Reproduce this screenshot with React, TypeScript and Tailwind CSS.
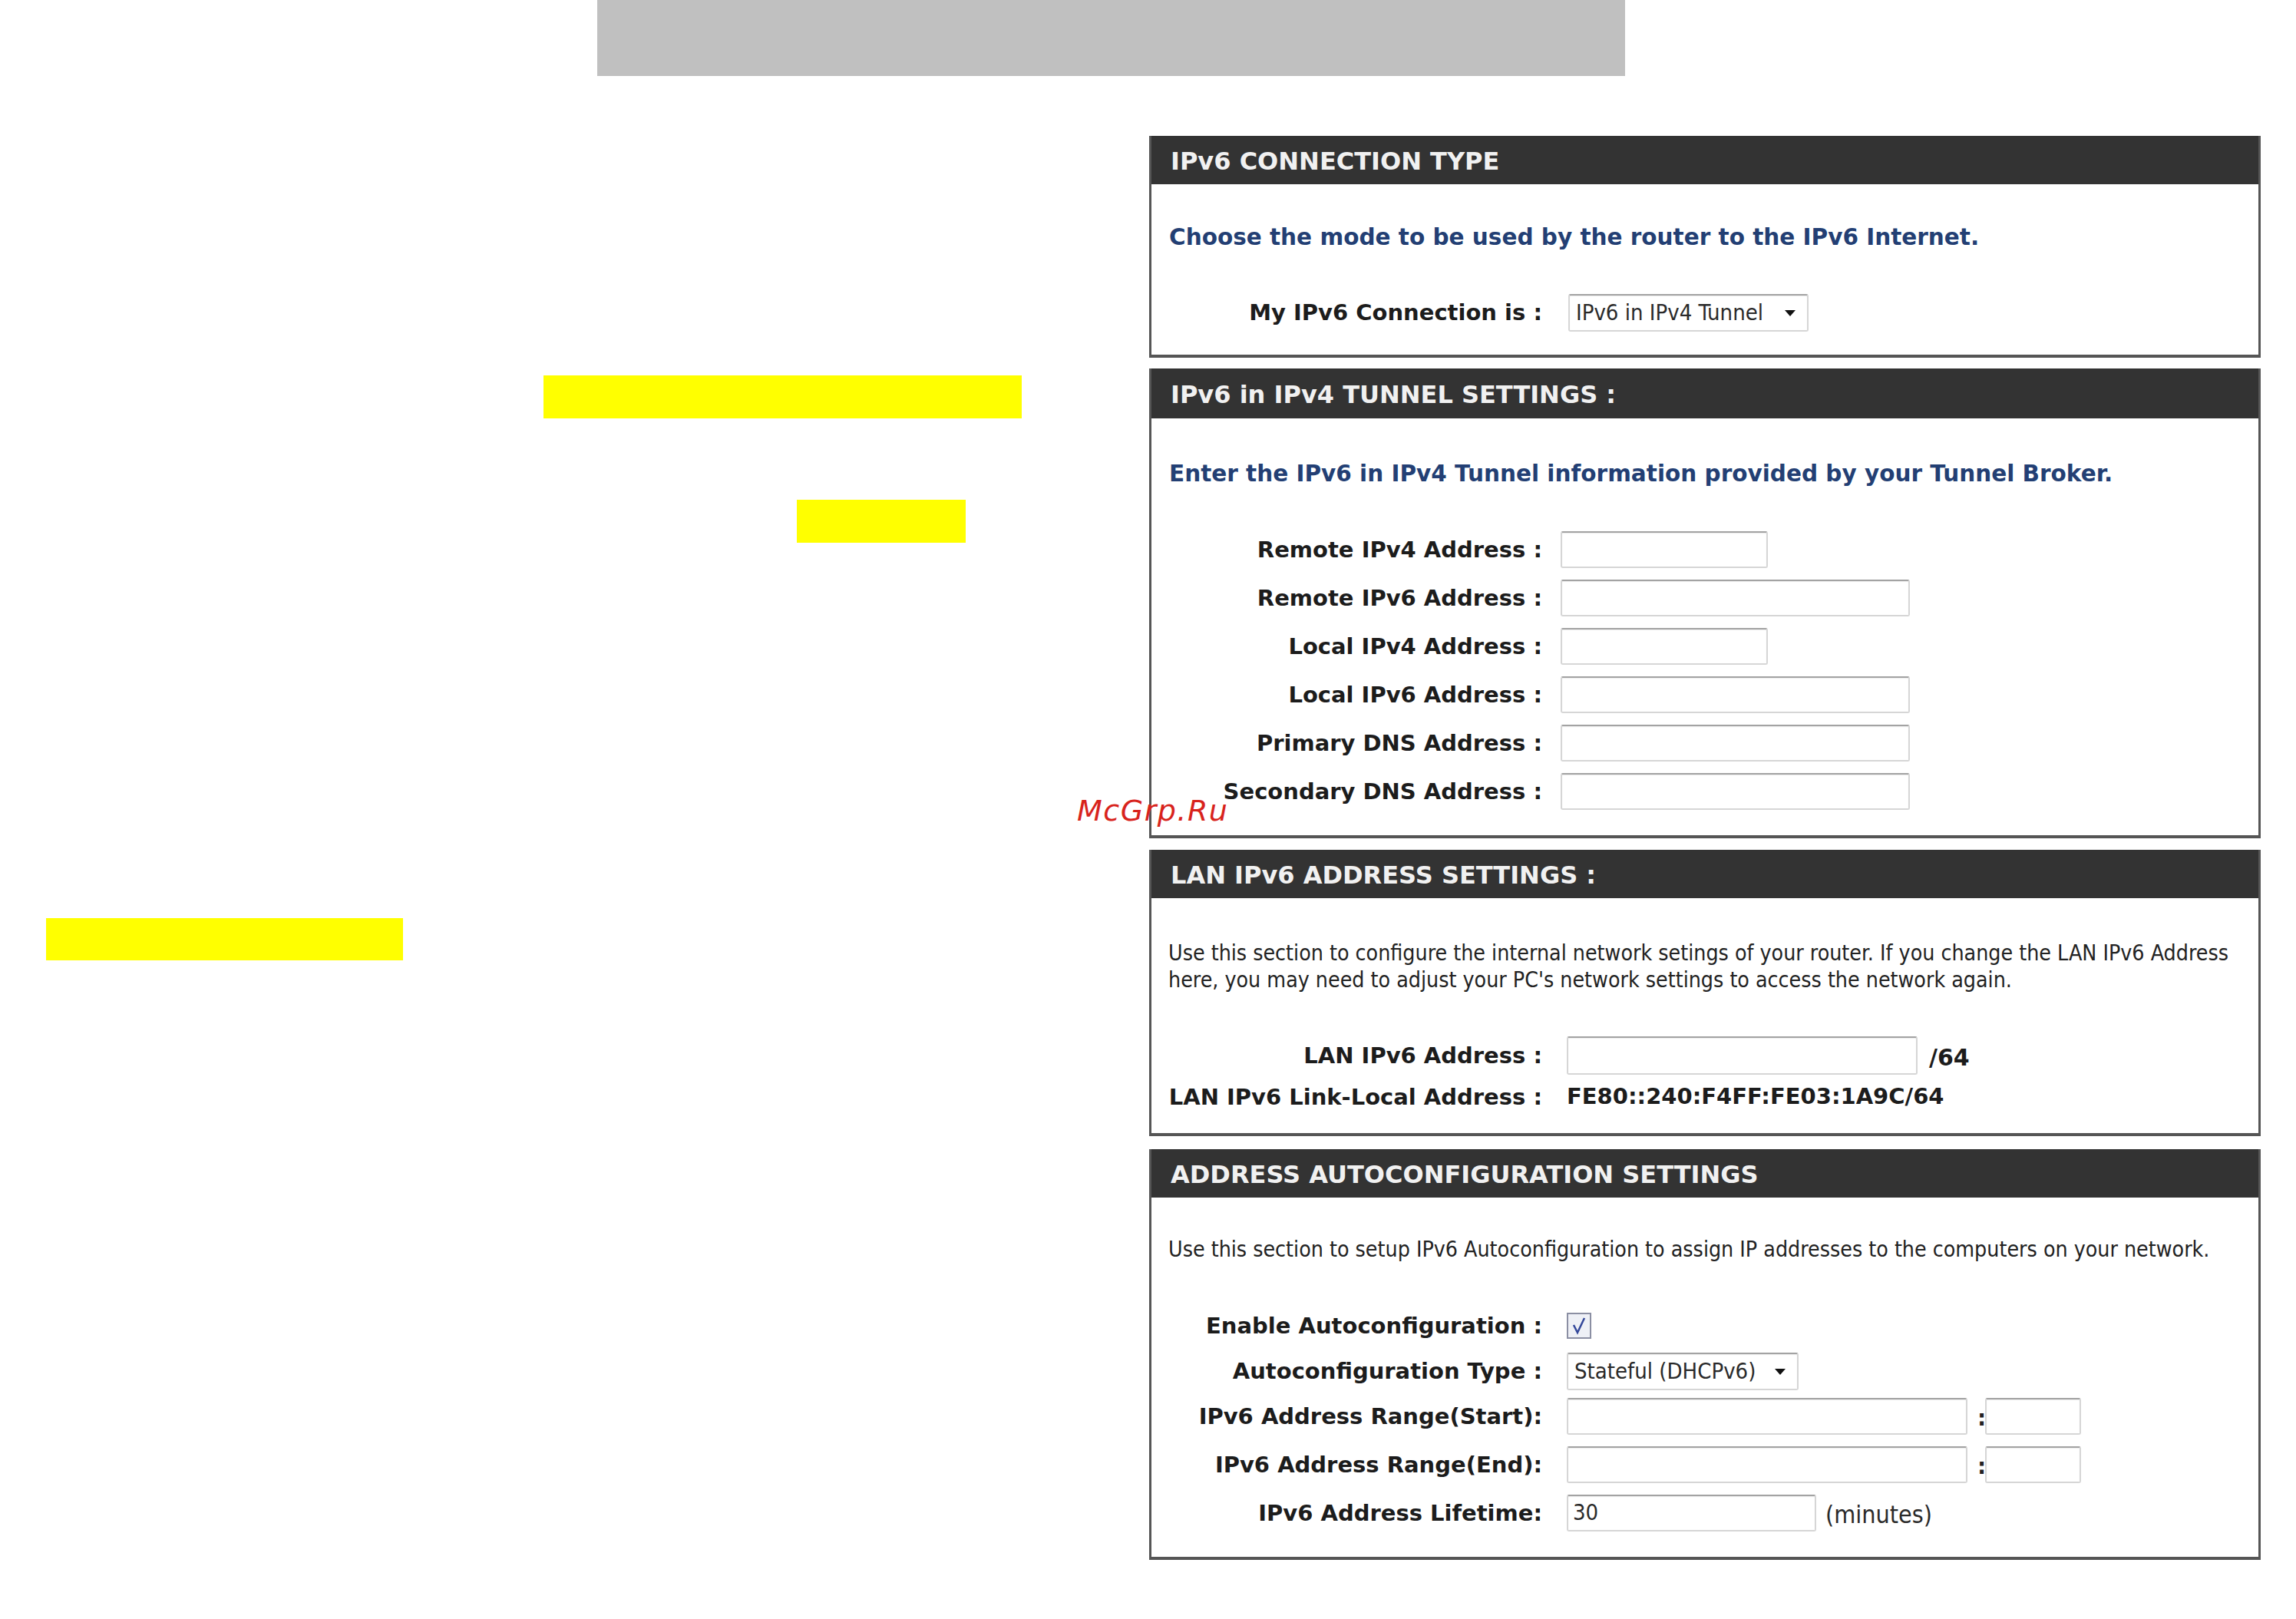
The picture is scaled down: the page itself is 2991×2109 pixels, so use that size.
import React from "react";

const LBL =
  "w-[509px] shrink-0 text-right whitespace-nowrap font-bold text-[29px] leading-none text-[#1c1c1c] font-['DejaVu_Sans',sans-serif]";
const INPUT =
  "bg-white border-2 border-[#d6d6d6] border-t-[#a3a3a3] rounded-[3px] shadow-[inset_0_1px_1px_rgba(0,0,0,0.08)]";
const BLUE =
  "font-bold text-[29.5px] leading-[40px] text-[#233f74] whitespace-nowrap font-['DejaVu_Sans',sans-serif]";
const PARA =
  "text-[28.3px] leading-[35px] text-[#222] whitespace-nowrap font-['DejaVu_Sans_Condensed','DejaVu_Sans',sans-serif]";
const SEL_TXT =
  "text-[29px] text-[#2a2a2a] whitespace-nowrap font-['DejaVu_Sans_Condensed','DejaVu_Sans',sans-serif]";

function Header({ children, h }: { children: React.ReactNode; h: string }) {
  return (
    <div
      className={`${h} bg-[#333333] flex items-center pl-[25px] pt-[3px] text-[#f1f1f1] font-bold text-[32px] tracking-[0px] whitespace-nowrap font-['DejaVu_Sans',sans-serif]`}
    >
      {children}
    </div>
  );
}

function Arrow() {
  return (
    <svg width="16" height="10" viewBox="0 0 16 10" className="shrink-0">
      <path d="M1 1 L15 1 L8 9 Z" fill="#111" />
    </svg>
  );
}

export default function App() {
  return (
    <div className="relative w-[2991px] h-[2109px] bg-white overflow-hidden">
      {/* gray band */}
      <div className="ml-[778px] w-[1339px] h-[99px] bg-[#c0c0c0]" />

      <div className="flex mt-[78px]">
        {/* left document column with highlights */}
        <div className="w-[1497px] shrink-0 flex flex-col">
          <div className="mt-[312px] ml-[708px] w-[623px] h-[56px] bg-[#ffff00]" />
          <div className="mt-[106px] ml-[1038px] w-[220px] h-[56px] bg-[#ffff00]" />
          <div className="mt-[489px] ml-[60px] w-[465px] h-[55px] bg-[#ffff00]" />
        </div>

        {/* router panels */}
        <div className="w-[1448px] shrink-0 flex flex-col">
          {/* Panel 1 */}
          <div className="h-[289px] border-x-[3px] border-b-[4px] border-[#555] flex flex-col">
            <Header h="h-[63px]">IPv6 CONNECTION TYPE</Header>
            <div className="pl-[23px] pt-[49px]">
              <div className={BLUE}>Choose the mode to be used by the router to the IPv6 Internet.</div>
            </div>
            <div className="flex items-center mt-[54px] h-[49px]">
              <div className={LBL}>My IPv6 Connection is :</div>
              <div className={`ml-[34px] w-[313px] h-[49px] ${INPUT} flex items-center justify-between pl-[8px] pr-[14px]`}>
                <span className={SEL_TXT}>IPv6 in IPv4 Tunnel</span>
                <Arrow />
              </div>
            </div>
          </div>

          {/* Panel 2 */}
          <div className="mt-[14px] h-[612px] border-x-[3px] border-b-[4px] border-[#555] flex flex-col">
            <Header h="h-[65px]">IPv6 in IPv4 TUNNEL SETTINGS :</Header>
            <div className="pl-[23px] pt-[52px]">
              <div className={BLUE}>Enter the IPv6 in IPv4 Tunnel information provided by your Tunnel Broker.</div>
            </div>
            <div className="mt-[55px] flex flex-col gap-[15px]">
              {[
                ["Remote IPv4 Address :", "w-[270px]"],
                ["Remote IPv6 Address :", "w-[455px]"],
                ["Local IPv4 Address :", "w-[270px]"],
                ["Local IPv6 Address :", "w-[455px]"],
                ["Primary DNS Address :", "w-[455px]"],
                ["Secondary DNS Address :", "w-[455px]"],
              ].map(([l, w]) => (
                <div key={l} className="flex items-center h-[48px]">
                  <div className={LBL}>{l}</div>
                  <div className={`ml-[24px] h-[48px] ${w} ${INPUT}`} />
                </div>
              ))}
            </div>
          </div>

          {/* Panel 3 */}
          <div className="mt-[15px] h-[373px] border-x-[3px] border-b-[4px] border-[#555] flex flex-col">
            <Header h="h-[63px]">LAN IPv6 ADDRESS SETTINGS :</Header>
            <div className="pl-[22px] pt-[54px]">
              <div className={PARA}>
                Use this section to configure the internal network setings of your router. If you change the LAN IPv6 Address
                <br />
                here, you may need to adjust your PC&apos;s network settings to access the network again.
              </div>
            </div>
            <div className="flex items-center mt-[56px] h-[50px]">
              <div className={LBL}>LAN IPv6 Address :</div>
              <div className={`ml-[32px] w-[457px] h-[50px] ${INPUT}`} />
              <span className="ml-[15px] mt-[4px] font-bold text-[30px] text-[#1c1c1c] font-['DejaVu_Sans',sans-serif]">/64</span>
            </div>
            <div className="flex items-center mt-[9px] h-[40px]">
              <div className={LBL}>LAN IPv6 Link-Local Address :</div>
              <span className="ml-[32px] font-bold text-[29px] text-[#1c1c1c] whitespace-nowrap font-['DejaVu_Sans',sans-serif]">
                FE80::240:F4FF:FE03:1A9C/64
              </span>
            </div>
          </div>

          {/* Panel 4 */}
          <div className="mt-[17px] h-[535px] border-x-[3px] border-b-[4px] border-[#555] flex flex-col">
            <Header h="h-[63px]">ADDRESS AUTOCONFIGURATION SETTINGS</Header>
            <div className="pl-[22px] pt-[50px]">
              <div className={PARA}>
                Use this section to setup IPv6 Autoconfiguration to assign IP addresses to the computers on your network.
              </div>
            </div>
            <div className="flex items-center mt-[58px] h-[48px]">
              <div className={LBL}>Enable Autoconfiguration :</div>
              <div className="ml-[32px] w-[32px] h-[34px] border-2 border-[#8b8fa3] bg-[#eef0f6] flex items-center justify-center">
                <svg width="20" height="24" viewBox="0 0 20 24">
                  <path d="M3 11 L8 21 L17 2" fill="none" stroke="#33479a" strokeWidth="2.5" />
                </svg>
              </div>
            </div>
            <div className="flex items-center mt-[11px] h-[49px]">
              <div className={LBL}>Autoconfiguration Type :</div>
              <div className={`ml-[32px] w-[302px] h-[49px] ${INPUT} flex items-center justify-between pl-[8px] pr-[14px]`}>
                <span className={SEL_TXT}>Stateful (DHCPv6)</span>
                <Arrow />
              </div>
            </div>
            {["IPv6 Address Range(Start):", "IPv6 Address Range(End):"].map((l, i) => (
              <div key={l} className={`flex items-center h-[48px] ${i === 0 ? "mt-[10px]" : "mt-[15px]"}`}>
                <div className={LBL}>{l}</div>
                <div className={`ml-[32px] w-[522px] h-[48px] ${INPUT}`} />
                <span className="ml-[13px] w-[6px] mt-[6px] text-[28px] font-bold text-[#222] font-['DejaVu_Sans',sans-serif]">:</span>
                <div className={`ml-[4px] w-[125px] h-[48px] ${INPUT}`} />
              </div>
            ))}
            <div className="flex items-center mt-[15px] h-[48px]">
              <div className={LBL}>IPv6 Address Lifetime:</div>
              <div className={`ml-[32px] w-[325px] h-[48px] ${INPUT} flex items-center pl-[6px]`}>
                <span className={SEL_TXT}>30</span>
              </div>
              <span className={`ml-[12px] mt-[4px] text-[32px] text-[#2a2a2a] whitespace-nowrap font-['DejaVu_Sans_Condensed','DejaVu_Sans',sans-serif]`}>(minutes)</span>
            </div>
          </div>
        </div>
      </div>

      {/* watermark */}
      <div className="absolute left-[1403px] top-[1028px] text-[38px] italic tracking-[1.5px] text-[#d8231c] font-['DejaVu_Sans',sans-serif]">
        McGrp.Ru
      </div>
    </div>
  );
}
